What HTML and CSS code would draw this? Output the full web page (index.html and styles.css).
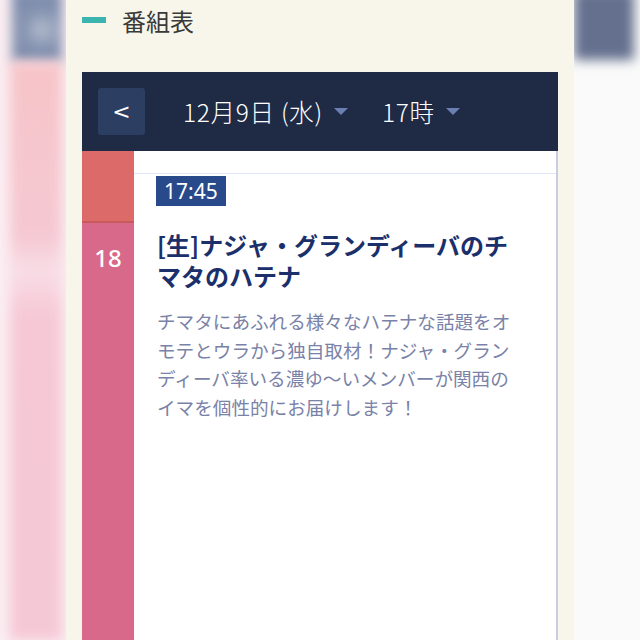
FILE: index.html
```html
<!DOCTYPE html>
<html lang="ja">
<head>
    <meta charset="UTF-8">
    <meta name="viewport" content="width=device-width, initial-scale=1.0">
    <title>番組表</title>
    <link rel="stylesheet" href="styles.css">
</head>
<body>
    <div class="screen">
        <div class="side side-left">
            <div class="blur blur-top"></div>
            <div class="blur blur-pink"></div>
        </div>

        <div class="panel">
            <h1 class="heading"><span class="dash"></span>番組表</h1>

            <div class="bar">
                <button class="back">&lt;</button>
                <span class="pick">12月9日 (水)<i class="tri"></i></span>
                <span class="pick">17時<i class="tri"></i></span>
            </div>

            <div class="grid">
                <div class="hours">
                    <div class="hour hour-17"></div>
                    <div class="hour hour-18">18</div>
                </div>
                <div class="progs">
                    <div class="prog-gap"></div>
                    <div class="prog">
                        <span class="time">17:45</span>
                        <h2 class="prog-title">[生]ナジャ・グランディーバのチマタのハテナ</h2>
                        <p class="prog-desc">チマタにあふれる様々なハテナな話題をオモテとウラから独自取材！ナジャ・グランディーバ率いる濃ゆ〜いメンバーが関西のイマを個性的にお届けします！</p>
                    </div>
                </div>
            </div>
        </div>

        <div class="side side-right">
            <div class="blur blur-top2"></div>
        </div>
    </div>
</body>
</html>
```

FILE: styles.css
```css
html,
body {
    margin: 0;
    padding: 0;
}

body {
    width: 640px;
    height: 640px;
    overflow: hidden;
    font-family: "Noto Sans CJK JP", "Noto Sans", sans-serif;
}

.screen {
    display: flex;
    height: 640px;
}

.side {
    width: 66px;
    overflow: hidden;
    display: flex;
    flex-direction: column;
}

.side-left {
    background: #fbeef2;
}

.side-right {
    background: #fafafa;
}

.blur {
    filter: blur(6px);
}

.blur-top {
    height: 72px;
    margin: -10px 4px 0 12px;
    background: radial-gradient(circle at 60% 55%, #b8c0d0 0, #8492b0 40%, #7485a6 100%);
}

.blur-pink {
    flex: 1;
    margin: 0 4px 0 10px;
    background: linear-gradient(#f6c4c8 0, #f5c8d2 30%, #f8dde6 36%, #f6c8d6 44%, #f5c8d6 100%);
}

.blur-top2 {
    height: 70px;
    margin: -10px 6px 0 0;
    background: #64708e;
}

.panel {
    width: 508px;
    background: #f8f6ea;
    padding: 0 16px;
    box-sizing: border-box;
    display: flex;
    flex-direction: column;
}

.heading {
    display: flex;
    align-items: center;
    gap: 16px;
    height: 40px;
    margin: 0 0 32px;
    font-size: 24px;
    font-weight: normal;
    color: #3a3a3a;
}

.dash {
    width: 24px;
    height: 6px;
    background: #3bb3ae;
}

.bar {
    height: 79px;
    background: #1f2a45;
    display: flex;
    align-items: center;
    padding: 0 16px;
    color: #fff;
    font-size: 24.5px;
    font-weight: 300;
    letter-spacing: 0.7px;
}

.back {
    width: 47px;
    height: 47px;
    border: 0;
    border-radius: 3px;
    background: #2c3e62;
    color: #fff;
    font-family: "DejaVu Sans", sans-serif;
    font-size: 22px;
    padding: 0;
    margin-right: 38px;
}

.pick {
    display: flex;
    align-items: center;
    margin-right: 34px;
}

.tri {
    width: 0;
    height: 0;
    margin-left: 11px;
    border-left: 7px solid transparent;
    border-right: 7px solid transparent;
    border-top: 7px solid #6a7fb2;
}

.grid {
    flex: 1;
    display: flex;
}

.hours {
    width: 52px;
    display: flex;
    flex-direction: column;
}

.hour-17 {
    height: 70px;
    background: #dc6a68;
    border-bottom: 2px solid #c85a5c;
}

.hour-18 {
    flex: 1;
    background: #d9698a;
    color: #fff;
    font-family: "Noto Sans", sans-serif;
    font-size: 24px;
    font-weight: 500;
    text-align: center;
    padding-top: 18px;
}

.progs {
    flex: 1;
    background: #fff;
    border-right: 2px solid #c8cde2;
}

.prog-gap {
    height: 22px;
    border-bottom: 1px solid #dfe5f7;
}

.prog {
    padding: 2px 40px 0 22px;
}

.time {
    display: inline-block;
    background: #294a8a;
    color: #fff;
    font-family: "Noto Sans", sans-serif;
    font-size: 21px;
    line-height: 30px;
    padding: 0 8px;
}

.prog-title {
    margin: 23px 0 0 1px;
    font-size: 24px;
    line-height: 31px;
    font-weight: bold;
    color: #1b2f6b;
}

.prog-desc {
    margin: 16px 0 0 1px;
    font-size: 18.6px;
    line-height: 28.5px;
    color: #7a82a8;
}
```
